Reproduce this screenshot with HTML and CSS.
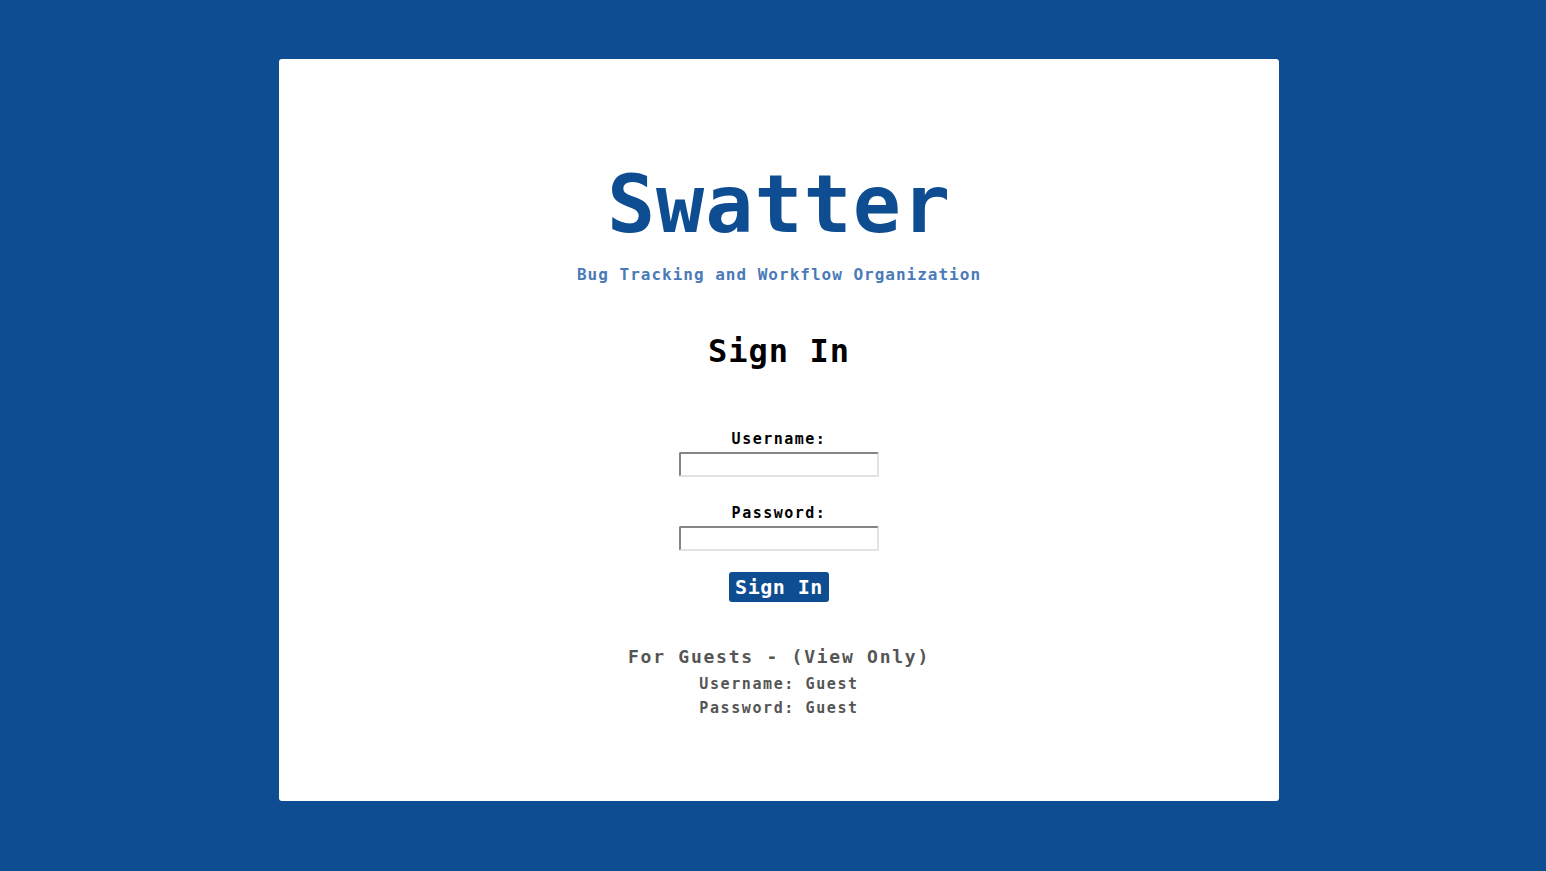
FILE: index.html
```html
<!DOCTYPE html>
<html lang="en">
<head>
<meta charset="utf-8">
<title>Swatter - Sign In</title>
<link rel="stylesheet" href="styles.css">
</head>
<body>
<main class="card">
  <h1 class="title">Swatter</h1>
  <p class="subtitle">Bug Tracking and Workflow Organization</p>
  <h2 class="heading">Sign In</h2>
  <form class="form">
    <label class="label" for="username">Username:</label>
    <input class="field" id="username" type="text">
    <label class="label label-second" for="password">Password:</label>
    <input class="field" id="password" type="password">
    <button class="btn" type="button">Sign In</button>
  </form>
  <div class="guest">
    <p class="guest-title">For Guests - (View Only)</p>
    <p class="guest-line">Username: Guest</p>
    <p class="guest-line">Password: Guest</p>
  </div>
</main>
</body>
</html>
```
FILE: styles.css
```css
html, body {
  margin: 0;
  padding: 0;
}
body {
  background: #0e4d91;
  font-family: "DejaVu Sans Mono", "Liberation Mono", monospace;
  font-weight: bold;
  padding-top: 59px;
  padding-left: 12px;
  height: 871px;
  box-sizing: border-box;
}
.card {
  width: 1000px;
  height: 742px;
  margin: 0 auto;
  background: #ffffff;
  border-radius: 3px;
  box-sizing: border-box;
  padding-top: 106px;
  display: flex;
  flex-direction: column;
  align-items: center;
  text-align: center;
}
.title {
  margin: 0;
  font-size: 80px;
  line-height: 80px;
  color: #0e4d91;
  letter-spacing: 1px;
}
.subtitle {
  margin: 20px 0 0;
  font-size: 16px;
  line-height: 20px;
  letter-spacing: 1px;
  color: #4a7ab8;
}
.heading {
  margin: 46px 0 0;
  font-size: 32px;
  line-height: 40px;
  letter-spacing: 1px;
  color: #000;
}
.form {
  margin: 58px 0 0;
  display: flex;
  flex-direction: column;
  align-items: center;
}
.label {
  display: block;
  font-size: 15px;
  line-height: 20px;
  letter-spacing: 1.5px;
  color: #000;
}
.label-second {
  margin-top: 26px;
}
.field {
  margin: 3px 0 0;
  width: 200px;
  height: 25px;
  box-sizing: border-box;
  border-style: solid;
  border-width: 2px;
  border-color: #858585 #e2e2e2 #e2e2e2 #858585;
  border-radius: 2px;
  background: #fff;
  padding: 1px 2px;
  font-family: inherit;
}
.btn {
  margin-top: 21px;
  width: 100px;
  height: 30px;
  border: none;
  border-radius: 3px;
  background: #0e4d91;
  color: #fff;
  font-family: inherit;
  font-weight: bold;
  font-size: 20px;
  letter-spacing: 0.5px;
  padding: 0;
}
.guest {
  margin-top: 43px;
  color: #555555;
}
.guest-title {
  margin: 0;
  font-size: 18px;
  line-height: 24px;
  letter-spacing: 1.75px;
}
.guest-title + .guest-line {
  margin-top: 3px;
}
.guest-line {
  margin: 0;
  font-size: 15px;
  line-height: 24px;
  letter-spacing: 1.6px;
}
```
